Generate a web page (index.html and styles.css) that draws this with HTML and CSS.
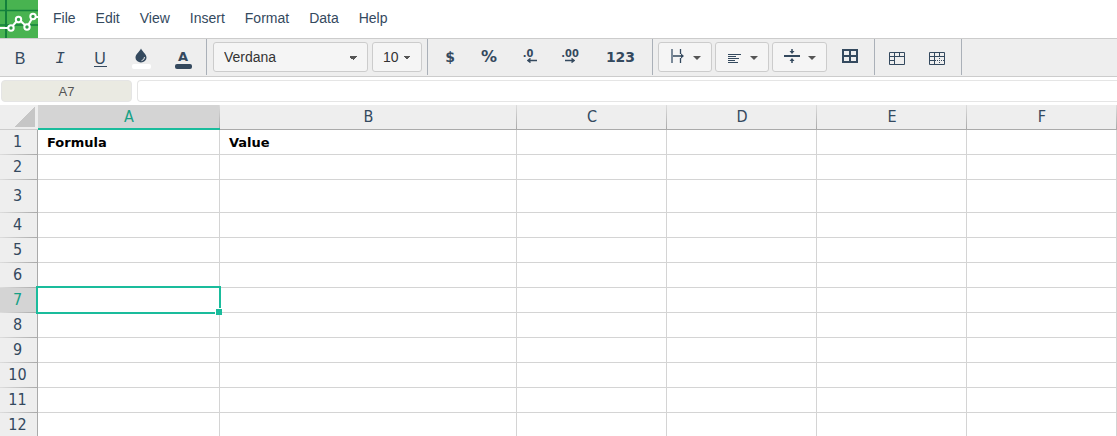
FILE: index.html
```html
<!DOCTYPE html>
<html lang="en">
<head>
    <meta charset="UTF-8">
    <meta name="viewport" content="width=device-width, initial-scale=1.0">
    <title>Spreadsheet</title>
    <link rel="stylesheet" href="styles.css">
</head>
<body>
    <header class="menubar">
        <a class="logo" href="#" aria-label="Home">
            <svg width="38" height="38" viewBox="0 0 38 38">
                <rect width="38" height="38" fill="#48b350"/>
                <path d="M0 10.5H38M0 25H38" stroke="#13803c" stroke-width="1.300"/>
                <path d="M6 0V38" stroke="#13803c" stroke-width="2"/>
                <path d="M0 28H11L18.500 19L27 27L33 17H38" fill="none" stroke="#fff" stroke-width="2"/>
                <g fill="#2f9c47" stroke="#fff" stroke-width="2">
                    <circle cx="11" cy="28" r="2.700"/>
                    <circle cx="18.500" cy="19.500" r="2.700"/>
                    <circle cx="27" cy="27" r="2.700"/>
                    <circle cx="33" cy="16.500" r="2.700"/>
                </g>
            </svg>
        </a>
        <nav class="menu">
            <a href="#">File</a>
            <a href="#">Edit</a>
            <a href="#">View</a>
            <a href="#">Insert</a>
            <a href="#">Format</a>
            <a href="#">Data</a>
            <a href="#">Help</a>
        </nav>
    </header>

    <div class="toolbar">
        <div class="group style-group">
            <button class="tool" aria-label="Bold">B</button>
            <button class="tool italic" aria-label="Italic">I</button>
            <button class="tool underline" aria-label="Underline"><span>U</span></button>
            <button class="tool color" aria-label="Fill color">
                <svg width="20" height="22" viewBox="0 0 20 22">
                    <path d="M10 0.500C8 4.500 4.500 6 4.500 9.700A5.500 4.800 0 0 0 15.500 9.700C15.500 6 12 4.500 10 0.500Z" fill="#34495e"/>
                    <path d="M13.500 9Q13.500 12 10.500 12.700" fill="none" stroke="#eee"/>
                    <rect x="1" y="16" width="19" height="5" rx="2" fill="#fff"/>
                </svg>
            </button>
            <button class="tool color text-color" aria-label="Text color">
                <span>A</span>
            </button>
        </div>
        <div class="group font-group">
            <select class="font-name" aria-label="Font">
                <option>Verdana</option>
                <option>Arial</option>
            </select>
            <select class="font-size" aria-label="Font size">
                <option>10</option>
                <option>12</option>
            </select>
        </div>
        <div class="group number-group">
            <button class="tool number" aria-label="Currency">$</button>
            <button class="tool number percent" aria-label="Percent">%</button>
            <button class="tool decimal" aria-label="Fewer decimals">
                <span>.0</span>
                <svg width="10" height="5" viewBox="0 0 10 5"><path d="M1 2.500H10M3.500 0.500L1 2.500L3.500 4.500" fill="none" stroke="#34495e" stroke-width="1.500"/></svg>
            </button>
            <button class="tool decimal more" aria-label="More decimals">
                <span>.00</span>
                <svg width="10" height="5" viewBox="0 0 10 5"><path d="M0 2.500H9M6.500 0.500L9 2.500L6.500 4.500" fill="none" stroke="#34495e" stroke-width="1.500"/></svg>
            </button>
            <button class="tool number wide" aria-label="Number format">123</button>
        </div>
        <div class="group align-group">
            <button class="drop" aria-label="Text overflow">
                <svg width="16" height="16" viewBox="0 0 16 16">
                    <path d="M2 1V15" stroke="#7b8a99" stroke-width="2"/>
                    <path d="M10.500 1V6M10.500 10V15M3 8H13" stroke="#34495e" stroke-width="1.300"/>
                    <path d="M11 5.500L14 8L11 10.500Z" fill="#34495e"/>
                </svg>
                <i class="caret"></i>
            </button>
            <button class="drop" aria-label="Horizontal align">
                <svg width="16" height="16" viewBox="0 0 16 16">
                    <path d="M1 6.500H14M1 8.500H9M1 10.500H12M1 12.500H8M1 14.500H11" stroke="#34495e"/>
                </svg>
                <i class="caret"></i>
            </button>
            <button class="drop" aria-label="Vertical align">
                <svg width="16" height="16" viewBox="0 0 16 16">
                    <path d="M0 8H16" stroke="#34495e" stroke-width="2"/>
                    <path d="M8 1V4M8 12V15" stroke="#34495e" stroke-width="1.500"/>
                    <path d="M5.500 3H10.500L8 6ZM5.500 13H10.500L8 10Z" fill="#34495e"/>
                </svg>
                <i class="caret"></i>
            </button>
            <button class="tool" aria-label="Borders">
                <svg class="raised" width="16" height="14" viewBox="0 0 16 14">
                    <path d="M1 1H15V13H1ZM8 1V13M1 7H15" fill="none" stroke="#34495e" stroke-width="2"/>
                </svg>
            </button>
        </div>
        <div class="group table-group">
            <button class="tool" aria-label="Merge cells">
                <svg width="16" height="13" viewBox="0 0 16 13">
                    <path d="M0.500 0.500H15.500V12.500H0.500ZM0.500 4.500H15.500M5.500 0.500V12.500M10.500 0.500V4.500M0.500 8.500H5.500" fill="none" stroke="#34495e"/>
                </svg>
            </button>
            <button class="tool" aria-label="Split cells">
                <svg width="16" height="13" viewBox="0 0 16 13">
                    <path d="M0.500 0.500H15.500V12.500H0.500ZM0.500 4.500H15.500M5.500 0.500V12.500M10.500 0.500V4.500M0.500 8.500H5.500" fill="none" stroke="#34495e"/>
                    <path d="M6 8.500H15M10.500 6V12" fill="none" stroke="#34495e" stroke-dasharray="1 1"/>
                </svg>
            </button>
        </div>
    </div>

    <div class="formula-bar">
        <input class="cell-name" type="text" value="A7" aria-label="Cell">
        <input class="formula" type="text" aria-label="Formula">
    </div>

    <main class="sheet">
        <table>
            <colgroup>
                <col class="col-head">
                <col class="col-a">
                <col class="col-b">
                <col>
                <col>
                <col>
                <col>
            </colgroup>
            <thead>
                <tr>
                    <th class="corner"></th>
                    <th class="active">A</th>
                    <th>B</th>
                    <th>C</th>
                    <th>D</th>
                    <th>E</th>
                    <th>F</th>
                </tr>
            </thead>
            <tbody>
                <tr><th>1</th><td>Formula</td><td>Value</td><td></td><td></td><td></td><td></td></tr>
                <tr><th>2</th><td></td><td></td><td></td><td></td><td></td><td></td></tr>
                <tr class="tall"><th>3</th><td></td><td></td><td></td><td></td><td></td><td></td></tr>
                <tr><th>4</th><td></td><td></td><td></td><td></td><td></td><td></td></tr>
                <tr><th>5</th><td></td><td></td><td></td><td></td><td></td><td></td></tr>
                <tr><th>6</th><td></td><td></td><td></td><td></td><td></td><td></td></tr>
                <tr><th class="active">7</th><td class="selected"></td><td></td><td></td><td></td><td></td><td></td></tr>
                <tr><th>8</th><td></td><td></td><td></td><td></td><td></td><td></td></tr>
                <tr><th>9</th><td></td><td></td><td></td><td></td><td></td><td></td></tr>
                <tr><th>10</th><td></td><td></td><td></td><td></td><td></td><td></td></tr>
                <tr><th>11</th><td></td><td></td><td></td><td></td><td></td><td></td></tr>
                <tr><th>12</th><td></td><td></td><td></td><td></td><td></td><td></td></tr>
            </tbody>
        </table>
    </main>
</body>
</html>
```

FILE: styles.css
```css
*{
    box-sizing: border-box;
}
body{
    margin: 0;
    height: 100vh;
    display: flex;
    flex-direction: column;
    overflow: hidden;
    background: #fff;
    color: #34495e;
    font-family: "Liberation Sans", Arial, sans-serif;
    font-size: 14px;
}
button,
select,
input{
    font-family: inherit;
    color: inherit;
    margin: 0;
}

/* menu */
.menubar{
    display: flex;
    height: 38px;
}
.logo svg{
    display: block;
}
.menu{
    display: flex;
    align-items: center;
    gap: 20px;
    padding: 0 15px 2px;
}
.menu a{
    color: #34495e;
    text-decoration: none;
}

/* toolbar */
.toolbar{
    display: flex;
    height: 39px;
    background: #eee;
    border-top: 1px solid #ccc;
    border-bottom: 1px solid #ccc;
}
.group{
    display: flex;
    align-items: center;
    height: 36px;
    border-right: 1px solid #aab0b8;
}
.style-group{
    padding-right: 2px;
}
.font-group{
    gap: 4px;
    padding: 0 5px 0 6px;
}
.number-group{
    padding: 0 3px 0 2px;
}
.align-group{
    gap: 3px;
    padding: 0 4px 0 5px;
}
.table-group{
    padding: 0 4px 0 2px;
}
.tool{
    display: flex;
    align-items: center;
    justify-content: center;
    width: 40px;
    height: 36px;
    padding: 4px 0 0;
    border: 0;
    background: none;
    font-size: 16px;
}
.table-group .tool{
    padding-top: 2px;
}
.italic{
    font-family: "Liberation Mono", "Courier New", monospace;
    font-style: italic;
}
.underline span{
    width: 13px;
    line-height: 15px;
    border-bottom: 1px solid #34495e;
}
.color{
    width: 42px;
}
.text-color{
    flex-direction: column;
}
.text-color span{
    font-family: "DejaVu Sans", Verdana, sans-serif;
    font-size: 13px;
    font-weight: bold;
    line-height: 15px;
}
.text-color::after{
    content: "";
    width: 17px;
    height: 5px;
    border-radius: 2px;
    background: #34495e;
}
.number{
    padding: 0;
    font-family: "DejaVu Sans", Verdana, sans-serif;
    font-size: 14px;
    font-weight: bold;
}
.percent{
    width: 38px;
    font-size: 16px;
    padding-bottom: 2px;
}
.wide{
    width: 57px;
}
.decimal{
    flex-direction: column;
    padding: 0 0 2px;
    font-family: "DejaVu Sans Condensed", "DejaVu Sans", Verdana, sans-serif;
    font-size: 11px;
    font-weight: bold;
    line-height: 8px;
}
.decimal svg{
    margin-left: 8px;
}
.more{
    width: 44px;
}
.more svg{
    margin-left: 0;
}
.raised{
    margin-bottom: 6px;
}
.font-name,
.font-size,
.drop{
    height: 30px;
    border: 1px solid #ccc;
    border-radius: 3px;
    background-color: #f5f5f5;
}
.font-name,
.font-size{
    appearance: none;
    padding: 0 10px;
    color: #333;
    font-size: 14px;
    background-image: conic-gradient(from -45deg at 50% 100%, #555 90deg, transparent 0);
    background-repeat: no-repeat;
    background-size: 8px 4px;
    background-position: right 10px top 13px;
}
.font-name{
    width: 155px;
}
.font-size{
    width: 50px;
}
.drop{
    display: flex;
    align-items: center;
    justify-content: space-between;
    width: 54px;
    padding: 0 10px 2px 11px;
}
.drop:nth-child(3){
    width: 55px;
}
.caret{
    margin-top: 4px;
    border: 4px solid transparent;
    border-top-color: #555;
    border-bottom: 0;
}

/* formula bar */
.formula-bar{
    display: flex;
    gap: 5px;
    height: 28px;
    padding: 3px 0 2px 1px;
}
.cell-name,
.formula{
    height: 22px;
    border: 1px solid #e5e5e5;
    border-radius: 4px;
    font-size: 13px;
}
.cell-name{
    width: 131px;
    background: #eaeae2;
    color: #555;
    text-align: center;
}
.formula{
    flex: 1;
    border-right: 0;
    border-radius: 4px 0 0 4px;
    background: #fff;
}

/* grid */
.sheet{
    flex: 1;
    min-height: 0;
    overflow: hidden;
}
table{
    width: 100%;
    table-layout: fixed;
    border-collapse: separate;
    border-spacing: 0;
}
.col-head{
    width: 38px;
}
.col-a{
    width: 182px;
}
.col-b{
    width: 297px;
}
th,
td{
    height: 25px;
    padding: 0;
}
th{
    background: linear-gradient(#ddd, #aaa) right / 1px 100% no-repeat #eee;
    font-family: "DejaVu Sans Condensed", "DejaVu Sans", Verdana, sans-serif;
    font-size: 16px;
    font-weight: normal;
    line-height: 20px;
}
thead th{
    padding-bottom: 1px;
    border-bottom: 1px solid #aaa;
}
tbody th{
    padding: 0 2px 2px 0;
    border-right: 1px solid #aaa;
    background: linear-gradient(to right, #ddd, #aaa) bottom / 100% 1px no-repeat #eee;
}
th.active{
    background-color: #d4d4d4;
    color: #16a085;
}
thead .active{
    border-bottom: 2px solid #1abc9c;
    padding-bottom: 0;
}
thead .corner{
    border-bottom-color: #ccc;
    background: linear-gradient(to bottom right, transparent 50%, #c6c6c6 50%) 15px 2px / 20px 20px no-repeat #eee;
}
td{
    padding: 2px 9px 0;
    border-right: 1px solid #d4d4d4;
    border-bottom: 1px solid #d4d4d4;
    color: #000;
    font-family: "DejaVu Sans", Verdana, sans-serif;
    font-size: 13px;
    font-weight: bold;
    line-height: 20px;
}
.tall th,
.tall td{
    height: 33px;
}
.selected{
    position: relative;
}
.selected::before{
    content: "";
    position: absolute;
    top: -2px;
    right: -2px;
    bottom: -2px;
    left: -2px;
    border: 2px solid #1abc9c;
}
.selected::after{
    content: "";
    position: absolute;
    right: -3px;
    bottom: -3px;
    width: 6px;
    height: 6px;
    border-top: 1px solid #fff;
    border-left: 1px solid #fff;
    background: #1abc9c;
}
```
